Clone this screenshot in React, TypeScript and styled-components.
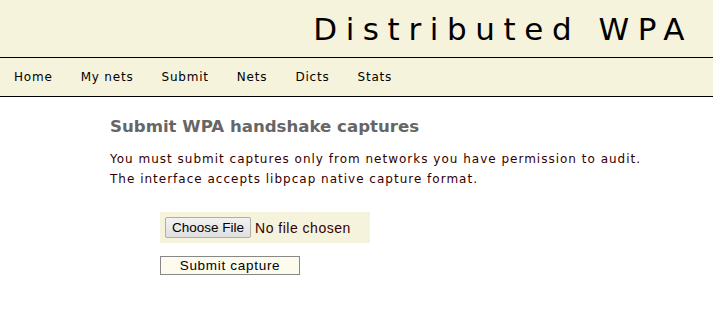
import React from "react";
import styled, { createGlobalStyle } from "styled-components";

const GlobalStyle = createGlobalStyle`
  body {
    margin: 0;
    background: #fff;
    font-family: "DejaVu Sans", Verdana, sans-serif;
    color: #300;
  }
`;

const Header = styled.header`
  background: #f5f3dc;
  border-bottom: 1px solid #000;
  height: 57px;
  display: flex;
  align-items: center;
  justify-content: flex-end;
  padding-right: 20px;
`;

const SiteTitle = styled.h1`
  margin: 0;
  font-weight: normal;
  font-size: 31px;
  letter-spacing: 8.6px;
  color: #000;
`;

const Nav = styled.nav`
  background: #f5f3dc;
  border-bottom: 1px solid #000;
  height: 38px;
  display: flex;
  align-items: center;
  padding-left: 14px;
  gap: 28px;
`;

const NavLink = styled.a`
  font-size: 12px;
  letter-spacing: 0.8px;
  color: #000;
  text-decoration: none;
`;

const Content = styled.main`
  padding: 20px 0 0 110px;
`;

const Heading = styled.h2`
  margin: 0 0 13px;
  font-size: 16.6px;
  font-weight: bold;
  color: #666;
`;

const Lede = styled.p`
  margin: 0;
  font-size: 12px;
  letter-spacing: 1px;
  line-height: 20px;
`;

const Form = styled.form`
  margin: 23px 0 0 50px;
  display: flex;
  flex-direction: column;
  align-items: flex-start;
  gap: 13px;
`;

const FileBox = styled.div`
  background: #f5f3dc;
  width: 210px;
  height: 31px;
  display: flex;
  align-items: center;
  padding-left: 5px;
  box-sizing: border-box;
  gap: 4px;
`;

const ChooseButton = styled.button`
  font-family: "Liberation Sans", Arial, sans-serif;
  font-size: 13.5px;
  color: #000;
  height: 21px;
  padding: 0 6px;
  border: 1px solid #adadad;
  border-radius: 2px;
  background: linear-gradient(#f2f2f2, #e0e0e0);
`;

const FileName = styled.span`
  font-family: "Liberation Sans", Arial, sans-serif;
  font-size: 14px;
  letter-spacing: 0.5px;
  color: #300;
`;

const SubmitButton = styled.button`
  width: 140px;
  height: 19px;
  font-family: "Liberation Sans", Arial, sans-serif;
  font-size: 13.5px;
  letter-spacing: 0.7px;
  color: #000;
  background: #fcfbee;
  border: 1px solid #888;
  padding: 0;
`;

const links = ["Home", "My nets", "Submit", "Nets", "Dicts", "Stats"];

export default function App() {
  return (
    <>
      <GlobalStyle />
      <Header>
        <SiteTitle>Distributed WPA</SiteTitle>
      </Header>
      <Nav>
        {links.map((l) => (
          <NavLink key={l} href="#">
            {l}
          </NavLink>
        ))}
      </Nav>
      <Content>
        <Heading>Submit WPA handshake captures</Heading>
        <Lede>
          You must submit captures only from networks you have permission to audit.
          <br />
          The interface accepts libpcap native capture format.
        </Lede>
        <Form onSubmit={(e) => e.preventDefault()}>
          <FileBox>
            <ChooseButton type="button">Choose File</ChooseButton>
            <FileName>No file chosen</FileName>
          </FileBox>
          <SubmitButton type="submit">Submit capture</SubmitButton>
        </Form>
      </Content>
    </>
  );
}
